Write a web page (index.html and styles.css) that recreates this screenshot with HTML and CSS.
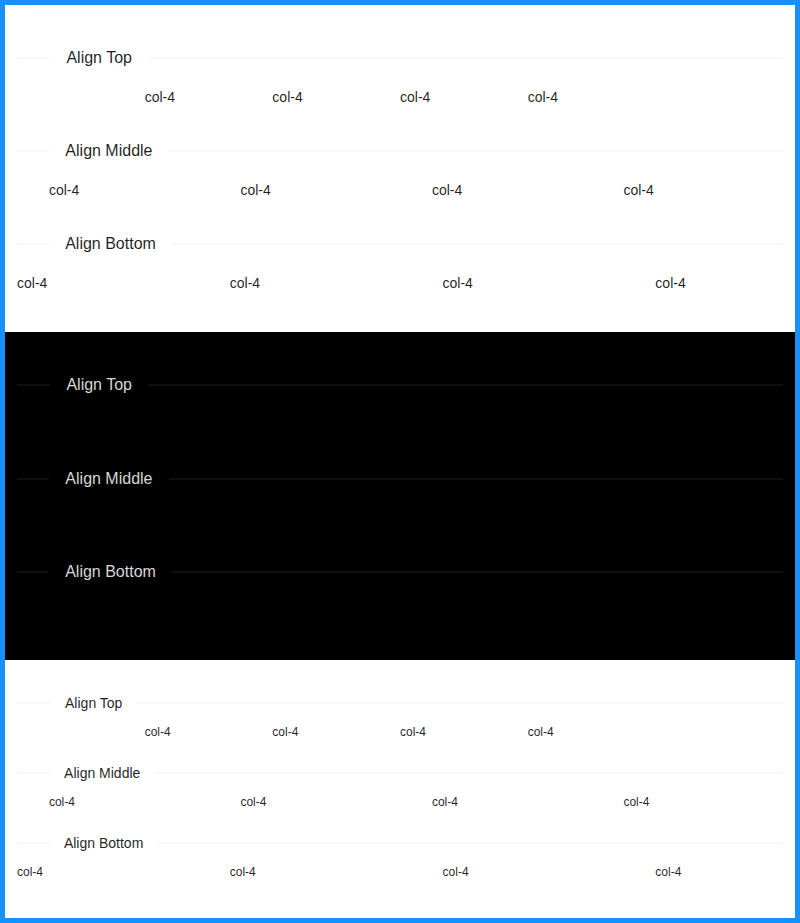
FILE: index.html
```html
<!DOCTYPE html>
<html>
<head>
<meta charset="utf-8">
<link rel="stylesheet" href="styles.css">
</head>
<body>
<div class="frame">
  <section class="panel">
    <div class="divider"><span class="divider-text">Align Top</span></div>
    <div class="row justify-center">
      <div class="col"><p>col-4</p></div>
      <div class="col"><p>col-4</p></div>
      <div class="col"><p>col-4</p></div>
      <div class="col"><p>col-4</p></div>
    </div>
    <div class="divider"><span class="divider-text">Align Middle</span></div>
    <div class="row justify-around">
      <div class="col"><p>col-4</p></div>
      <div class="col"><p>col-4</p></div>
      <div class="col"><p>col-4</p></div>
      <div class="col"><p>col-4</p></div>
    </div>
    <div class="divider"><span class="divider-text">Align Bottom</span></div>
    <div class="row justify-between">
      <div class="col"><p>col-4</p></div>
      <div class="col"><p>col-4</p></div>
      <div class="col"><p>col-4</p></div>
      <div class="col"><p>col-4</p></div>
    </div>
  </section>
  <section class="panel dark">
    <div class="divider"><span class="divider-text">Align Top</span></div>
    <div class="row justify-center">
      <div class="col"><p>col-4</p></div>
      <div class="col"><p>col-4</p></div>
      <div class="col"><p>col-4</p></div>
      <div class="col"><p>col-4</p></div>
    </div>
    <div class="divider"><span class="divider-text">Align Middle</span></div>
    <div class="row justify-around">
      <div class="col"><p>col-4</p></div>
      <div class="col"><p>col-4</p></div>
      <div class="col"><p>col-4</p></div>
      <div class="col"><p>col-4</p></div>
    </div>
    <div class="divider"><span class="divider-text">Align Bottom</span></div>
    <div class="row justify-between">
      <div class="col"><p>col-4</p></div>
      <div class="col"><p>col-4</p></div>
      <div class="col"><p>col-4</p></div>
      <div class="col"><p>col-4</p></div>
    </div>
  </section>
  <section class="panel small">
    <div class="divider"><span class="divider-text">Align Top</span></div>
    <div class="row justify-center">
      <div class="col"><p>col-4</p></div>
      <div class="col"><p>col-4</p></div>
      <div class="col"><p>col-4</p></div>
      <div class="col"><p>col-4</p></div>
    </div>
    <div class="divider"><span class="divider-text">Align Middle</span></div>
    <div class="row justify-around">
      <div class="col"><p>col-4</p></div>
      <div class="col"><p>col-4</p></div>
      <div class="col"><p>col-4</p></div>
      <div class="col"><p>col-4</p></div>
    </div>
    <div class="divider"><span class="divider-text">Align Bottom</span></div>
    <div class="row justify-between">
      <div class="col"><p>col-4</p></div>
      <div class="col"><p>col-4</p></div>
      <div class="col"><p>col-4</p></div>
      <div class="col"><p>col-4</p></div>
    </div>
  </section>
</div>
</body>
</html>
```
FILE: styles.css
```css
html, body {
  margin: 0;
  padding: 0;
}
body {
  font-family: "Liberation Sans", Arial, sans-serif;
  color: rgba(0, 0, 0, 0.88);
}
.frame {
  border: 5px solid #1890ff;
  box-sizing: border-box;
  height: 923px;
  background: #fff;
}
.panel {
  padding: 24px 12px;
  background: #fff;
}
.divider {
  display: flex;
  align-items: center;
  margin: 16px 0;
  font-size: 16px;
  line-height: 1.5715;
  color: rgba(0, 0, 0, 0.88);
  white-space: nowrap;
}
.divider::before,
.divider::after {
  content: "";
  border-top: 1px solid rgba(5, 5, 5, 0.06);
  transform: translateY(50%);
}
.divider::before {
  width: 5%;
}
.divider::after {
  width: 95%;
}
.divider-text {
  padding: 0 1em;
}
.row {
  display: flex;
}
.justify-center { justify-content: center; }
.justify-around { justify-content: space-around; }
.justify-between { justify-content: space-between; }
.col {
  flex: 0 0 16.6667%;
  max-width: 16.6667%;
  font-size: 14px;
  line-height: 1.5715;
}
.col p {
  margin: 0 0 14px;
}
.dark {
  background: #000;
}
.dark .divider {
  color: rgba(255, 255, 255, 0.85);
}
.dark .divider::before,
.dark .divider::after {
  border-top-color: rgba(253, 253, 253, 0.12);
}
.dark .col {
  color: #000;
}
.small .divider {
  font-size: 14px;
  line-height: 22px;
  margin: 8px 0;
}
.small .col {
  font-size: 12px;
  line-height: 20px;
}
.small .col p {
  margin: 0 0 12px;
}
```
